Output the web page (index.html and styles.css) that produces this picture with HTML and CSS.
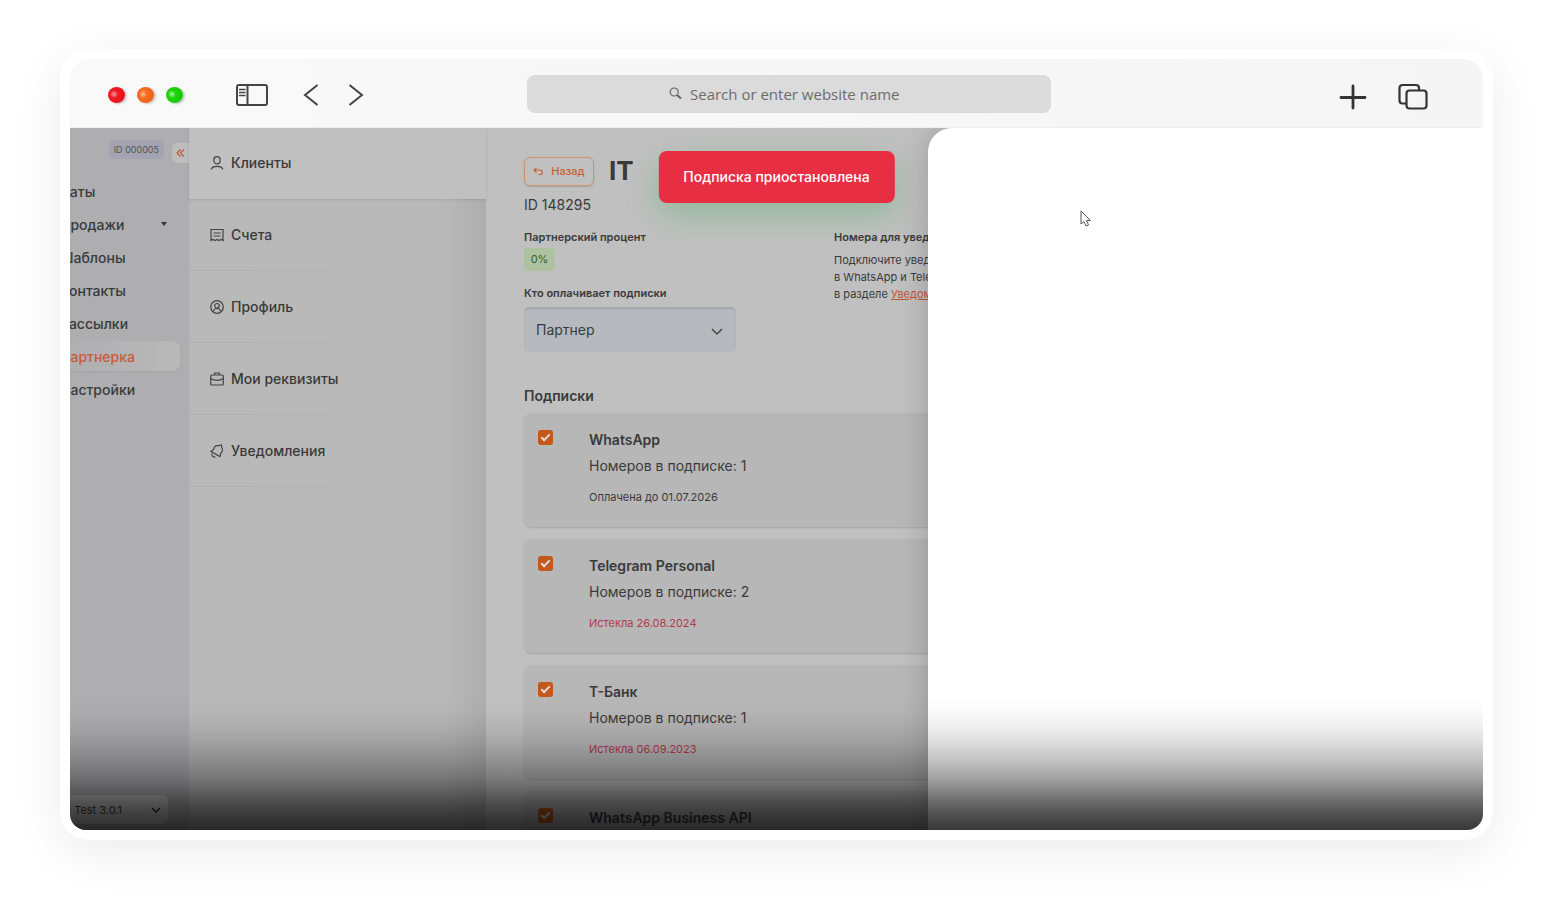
FILE: index.html
```html
<!DOCTYPE html>
<html lang="ru">
<head>
<meta charset="UTF-8">
<meta name="viewport" content="width=device-width, initial-scale=1.0">
<title>Партнерка</title>
<link rel="stylesheet" href="styles.css">
</head>
<body>

<div class="window">
  <header class="toolbar">
    <div class="dots">
      <span class="dot red"></span>
      <span class="dot orange"></span>
      <span class="dot green"></span>
    </div>
    <button class="tool panel-btn" type="button" aria-label="Sidebar">
      <svg width="34" height="24" viewBox="0 0 34 24" fill="none" stroke="#444" stroke-width="2">
        <rect x="2" y="2" width="30" height="20" rx="2"/>
        <path d="M12.500 2v20"/>
        <path d="M4 6.500h6.500M4 9.500h6.500M4 12.500h6.500" stroke-width="1.500"/>
      </svg>
    </button>
    <button class="tool back-btn" type="button" aria-label="Back">
      <svg width="16" height="22" viewBox="0 0 16 22" fill="none" stroke="#444" stroke-width="2"><path d="M14.500 1L2 11l12.500 10"/></svg>
    </button>
    <button class="tool forward-btn" type="button" aria-label="Forward">
      <svg width="16" height="22" viewBox="0 0 16 22" fill="none" stroke="#444" stroke-width="2"><path d="M1.500 1L14 11L1.500 21"/></svg>
    </button>
    <label class="search">
      <svg width="13" height="13" viewBox="0 0 13 13" fill="none" stroke="#666"><circle cx="5.200" cy="5" r="4" stroke-width="1.200"/><path d="M8 8l4 3.500" stroke-width="2"/></svg>
      <input type="text" placeholder="Search or enter website name" aria-label="Search or enter website name">
    </label>
    <button class="tool" type="button" aria-label="New tab">
      <svg width="28" height="28" viewBox="0 0 28 28" fill="none" stroke="#333" stroke-width="2.800" stroke-linecap="round"><path d="M14 3v22M2 14.500h24"/></svg>
    </button>
    <button class="tool tabs-btn" type="button" aria-label="Tabs">
      <svg width="30" height="28" viewBox="0 0 30 28" fill="none" stroke="#333" stroke-width="2.200">
        <path d="M8 20.500H4.500a3 3 0 0 1-3-3V5a3 3 0 0 1 3-3H18a3 3 0 0 1 3 3v2"/>
        <rect x="8.500" y="7.500" width="20" height="18" rx="3"/>
      </svg>
    </button>
  </header>

  <div class="page">
    <aside class="sidebar">
      <div class="account">
        <span class="account-id">ID 000005</span>
        <button class="collapse" type="button" aria-label="Свернуть">
          <svg width="9" height="8" viewBox="0 0 9 8" fill="none" stroke="#c5582a" stroke-width="1.200"><path d="M4.500 .5L1 4l3.500 3.500M8 .5L4.500 4L8 7.500"/></svg>
        </button>
      </div>
      <nav class="menu">
        <a href="#">Чаты</a>
        <a href="#">Продажи <span class="caret"></span></a>
        <a href="#">Шаблоны</a>
        <a href="#">Контакты</a>
        <a href="#">Рассылки</a>
        <a href="#" class="active">Партнерка</a>
        <a href="#">Настройки</a>
      </nav>
      <div class="project">
        <select aria-label="Проект"><option>Client: Test 3.0.1</option></select>
        <svg class="arrow" width="10" height="7" viewBox="0 0 10 7" fill="none" stroke="#222" stroke-width="1.300"><path d="M1 1l4 4l4-4"/></svg>
      </div>
    </aside>

    <nav class="sections">
      <a href="#" class="current">
        <svg viewBox="0 0 14 14"><ellipse cx="7" cy="4.300" rx="3.200" ry="3.600"/><path d="M1.500 13.500v-1c2-2.800 9-2.800 11 0v1"/></svg>
        Клиенты
      </a>
      <a href="#">
        <svg viewBox="0 0 14 14"><path d="M1 12.500V1.500h12v11l-2-1-2 1-2-1-2 1-2-1zM3.500 5h7M3.500 8h7"/></svg>
        Счета
      </a>
      <a href="#">
        <svg viewBox="0 0 14 14"><circle cx="7" cy="7" r="6.300"/><circle cx="7" cy="5.800" r="2.300"/><path d="M3.500 11.500c0-4 7-4 7 0"/></svg>
        Профиль
      </a>
      <a href="#">
        <svg viewBox="0 0 14 14"><rect x=".7" y="3" width="12.600" height="10" rx="1"/><path d="M4.500 3V1h5v2M.7 6.500C4 9 10 9 13.300 6.500M5.500 8.500h3"/></svg>
        Мои реквизиты
      </a>
      <a href="#">
        <svg viewBox="0 0 14 14"><path d="M1 7.500L3.500 5.500C4.200 2.800 6.200 1.300 8.500 1.700L11.500 1l.3 2.500c1.200 2.200.7 4.300-1 5.800L10 12.500zM1.500 9.800c.2 2 1.800 3.500 4 3.200"/></svg>
        Уведомления
      </a>
    </nav>

    <main class="content">
      <div class="heading">
        <button class="return" type="button">
          <svg width="10" height="9" viewBox="0 0 10 9" fill="none" stroke="#c5622f" stroke-width="1.200"><path d="M3.500 1L1 3l2.500 2.500M1 3h6c3 0 3 4.500 0 4.500H5.500"/></svg>
          Назад
        </button>
        <h1>IT</h1>
      </div>
      <p class="client-id">ID 148295</p>

      <div class="params">
        <div>
          <h3>Партнерский процент</h3>
          <span class="percent">0%</span>
          <label class="payer-label" for="payer">Кто оплачивает подписки</label>
          <div class="payer">
            <select id="payer"><option>Партнер</option></select>
            <svg class="arrow" width="12" height="8" viewBox="0 0 12 8" fill="none" stroke="#444" stroke-width="1.500"><path d="M1 1l5 5l5-5"/></svg>
          </div>
        </div>
        <div>
          <h3>Номера для уведомлений</h3>
          <p class="hint">Подключите уведомления<br>в WhatsApp и Telegram<br>в разделе <a href="#">Уведомления</a></p>
        </div>
      </div>

      <h2>Подписки</h2>
      <div class="cards">
        <div class="card">
          <input type="checkbox" id="sub1" checked>
          <div>
            <label for="sub1">WhatsApp</label>
            <p>Номеров в подписке: 1</p>
            <small>Оплачена до 01.07.2026</small>
          </div>
        </div>
        <div class="card">
          <input type="checkbox" id="sub2" checked>
          <div>
            <label for="sub2">Telegram Personal</label>
            <p>Номеров в подписке: 2</p>
            <small class="expired">Истекла 26.08.2024</small>
          </div>
        </div>
        <div class="card">
          <input type="checkbox" id="sub3" checked>
          <div>
            <label for="sub3">Т-Банк</label>
            <p>Номеров в подписке: 1</p>
            <small class="expired">Истекла 06.09.2023</small>
          </div>
        </div>
        <div class="card">
          <input type="checkbox" id="sub4" checked>
          <div>
            <label for="sub4">WhatsApp Business API</label>
          </div>
        </div>
      </div>
    </main>

    <div class="toast" role="alert">Подписка приостановлена</div>
    <div class="drawer"></div>
    <svg class="cursor" width="12" height="18" viewBox="0 0 12 18" fill="#fff" stroke="#555"><path d="M1 1v13l3-2.500l2 4.500l2.500-1l-2-4.500H10.500z"/></svg>
    <div class="shade"></div>
  </div>
</div>

</body>
</html>
```
FILE: styles.css
```css
* {
  box-sizing: border-box;
}

body {
  min-height: 100vh;
  margin: 0;
  padding: 49px 60px 0;
  background-color: #fff;
  font-family: Inter, "Liberation Sans", sans-serif;
  color: #3a3a3a;
}

h1, h2, h3, p {
  margin: 0;
}

a {
  color: inherit;
  text-decoration: none;
}

button, select, input {
  font-family: inherit;
  color: inherit;
}

.window {
  display: flex;
  flex-direction: column;
  height: calc(100vh - 121px);
  padding: 10px;
  background-color: #fff;
  border-radius: 28px;
  box-shadow: 0 12px 50px rgba(0, 0, 0, 0.08);
}

/* browser toolbar */
.toolbar {
  display: flex;
  align-items: center;
  flex: none;
  height: 69px;
  padding: 0 55px 0 38px;
  background: linear-gradient(to right, #f9f9f9, #f5f5f5);
  border-radius: 20px 20px 0 0;
  border-bottom: 1px solid #eee;
}

.dots {
  display: flex;
  gap: 12px;
  padding-top: 4px;
}

.dot {
  width: 17px;
  height: 16px;
  border-radius: 50%;
  box-shadow: 2px 1px 2px rgba(0, 0, 0, 0.2);
}

.red {
  background: radial-gradient(circle at 35% 45%, #ff9c9c, #ee1c24 28%, #dd0a12);
}

.orange {
  background: radial-gradient(circle at 35% 45%, #ffc09c, #f66c22 28%, #ec5c10);
}

.green {
  background: radial-gradient(circle at 35% 45%, #a0ff9c, #1ed20c 28%, #10c400);
}

.tool {
  display: flex;
  padding: 0;
  border: none;
  background: none;
  cursor: pointer;
}

.panel-btn {
  margin: 4px 34px 0 52px;
}

.back-btn {
  margin: 4px 29px 0 0;
}

.forward-btn {
  margin-top: 4px;
}

.search {
  display: flex;
  align-items: center;
  justify-content: center;
  gap: 8px;
  flex: 1;
  height: 38px;
  margin: 1px 288px 0 163px;
  border-radius: 8px;
  background-color: #dbdbdb;
}

.search input {
  width: 219px;
  padding: 0;
  border: none;
  outline: none;
  background: none;
  font-family: "Open Sans", sans-serif;
  font-size: 15px;
}

.search input::placeholder {
  color: #6c6c6c;
  opacity: 1;
}

.toolbar .search ~ .tool {
  margin-top: 8px;
}

.toolbar .tabs-btn {
  margin-left: 31px;
}

/* app */
.page {
  position: relative;
  display: flex;
  flex: 1;
  min-height: 0;
  overflow: hidden;
  background-color: #c0c0c0;
  border-radius: 0 0 16px 16px;
}

.sidebar {
  display: flex;
  flex-direction: column;
  width: 119px;
  flex: none;
  overflow: hidden;
  background-color: #aeaeb1;
}

.account {
  display: flex;
  justify-content: flex-end;
  gap: 8px;
  height: 48px;
  padding-top: 12px;
}

.account-id {
  height: 19px;
  padding: 0 5px;
  border-radius: 4px;
  background-color: #a3a3b3;
  color: #555;
  font-size: 9px;
  line-height: 19px;
}

.collapse {
  display: flex;
  align-items: center;
  width: 17px;
  height: 20px;
  margin-top: 3px;
  padding: 0 4px;
  border: none;
  border-radius: 5px 0 0 5px;
  background-color: #bdbdbd;
}

.menu {
  margin-left: -10px;
}

.menu a {
  display: flex;
  align-items: center;
  justify-content: space-between;
  height: 30px;
  margin: 0 9px 3px 0;
  padding-right: 13px;
  border-radius: 0 8px 8px 0;
  font-size: 14px;
  font-weight: 500;
}

.menu .active {
  background: linear-gradient(to right, #aeaeb1, #b9b9b9);
  box-shadow: 0 1px 2px rgba(0, 0, 0, 0.06);
  color: #cb5a38;
}

.caret {
  border: 3px solid transparent;
  border-top: 4px solid #333;
  border-bottom: 0;
}

.project,
.payer {
  position: relative;
}

.project {
  margin: auto 21px 6px -40px;
}

.project select,
.payer select {
  width: 100%;
  border: none;
  appearance: none;
}

.project select {
  height: 29px;
  padding: 0 8px;
  border-radius: 6px;
  background-color: #c8c8c8;
  font-size: 11px;
}

.arrow {
  position: absolute;
  top: 12px;
  right: 7px;
  pointer-events: none;
}

.sections {
  width: 297px;
  flex: none;
  background: linear-gradient(to left, #adadad, #b9b9b9 40px);
}

.sections a {
  display: flex;
  align-items: center;
  gap: 7px;
  height: 72px;
  padding-left: 21px;
  border-bottom: 1px solid;
  border-image: linear-gradient(to right, #adadad, transparent 80%) 1;
  font-size: 14px;
  font-weight: 500;
}

.sections .current {
  height: 71px;
  padding-bottom: 2px;
  border: none;
  background-color: #c0c0c0;
  box-shadow: 0 1px 3px rgba(0, 0, 0, 0.12);
}

.sections svg {
  width: 14px;
  height: 14px;
  fill: none;
  stroke: #444;
  stroke-width: 1.200;
}

.content {
  flex: 1;
  min-width: 0;
  padding: 28px 38px 0;
}

.heading {
  display: flex;
  align-items: center;
  gap: 15px;
  height: 30px;
}

.return {
  display: flex;
  align-items: center;
  justify-content: center;
  gap: 8px;
  width: 70px;
  height: 29px;
  padding: 0;
  border: 1px solid #d0916c;
  border-radius: 6px;
  background: none;
  box-shadow: 0 1px 2px rgba(0, 0, 0, 0.15);
  color: #c5622f;
  font-size: 11px;
  font-weight: 500;
}

h1 {
  font-size: 26px;
  line-height: 28px;
  font-weight: 700;
}

.client-id {
  margin-top: 9px;
  font-size: 14px;
  line-height: 20px;
}

.params {
  display: grid;
  grid-template-columns: 310px 1fr;
  margin-top: 14px;
}

h3,
.payer-label {
  display: block;
  font-size: 11px;
  line-height: 16px;
  font-weight: 600;
}

.percent {
  display: block;
  width: 31px;
  height: 23px;
  margin: 3px 0 14px;
  border-radius: 4px;
  background-color: #adc2a1;
  color: #3a5a33;
  font-size: 11px;
  line-height: 23px;
  text-align: center;
}

.payer {
  width: 212px;
  margin-top: 6px;
}

.payer select {
  height: 45px;
  padding: 0 12px;
  border-radius: 5px;
  background-color: #b6babf;
  box-shadow: inset 0 2px 2px rgba(0, 0, 0, 0.1);
  font-size: 14px;
}

.payer .arrow {
  top: 21px;
  right: 13px;
}

.hint {
  margin-top: 7px;
  font-size: 11px;
  line-height: 17px;
}

.hint a {
  color: #c25433;
  text-decoration: underline;
}

h2 {
  margin-top: 34px;
  font-size: 14px;
  line-height: 20px;
  font-weight: 600;
}

.cards {
  display: flex;
  flex-direction: column;
  gap: 12px;
  margin-top: 7px;
}

.card {
  display: flex;
  gap: 36px;
  height: 114px;
  padding: 17px 14px;
  border-radius: 8px;
  background-color: #b7b7b7;
  box-shadow: 0 1px 2px rgba(0, 0, 0, 0.14);
}

.card input {
  width: 15px;
  height: 15px;
  margin: 0;
  appearance: none;
  border-radius: 3px;
  background-color: #c4581a;
}

.card input::after {
  content: "";
  display: block;
  width: 7px;
  height: 3px;
  margin: 4px 3px;
  border: solid #ddd;
  border-width: 0 0 2px 2px;
  transform: rotate(-45deg);
}

.card label {
  display: block;
  font-size: 14px;
  line-height: 20px;
  font-weight: 600;
}

.card p {
  margin-top: 6px;
  font-size: 14px;
  line-height: 20px;
}

.card small {
  display: block;
  margin-top: 12px;
  font-size: 11px;
  line-height: 18px;
}

.card .expired {
  color: #b33a4a;
}

/* overlays */
.toast {
  position: absolute;
  top: 23px;
  left: 50%;
  transform: translateX(-50%);
  padding: 16px 25px;
  border-radius: 8px;
  background-color: #e72e42;
  box-shadow: 0 12px 30px rgba(60, 170, 90, 0.35);
  color: #fff;
  font-size: 14px;
  line-height: 20px;
  font-weight: 500;
  white-space: nowrap;
}

.drawer {
  position: absolute;
  top: 0;
  right: 0;
  bottom: 0;
  width: 555px;
  border-radius: 24px 0 0 0;
  background-color: #fff;
  box-shadow: 0 0 30px rgba(0, 0, 0, 0.2);
}

.cursor {
  position: absolute;
  top: 82px;
  right: 391px;
}

.shade {
  position: absolute;
  right: 0;
  bottom: 0;
  left: 0;
  height: 134px;
  background: linear-gradient(to bottom, transparent, rgba(0, 0, 0, 0.02) 12%, rgba(0, 0, 0, 0.08) 26%, rgba(0, 0, 0, 0.14) 36%, rgba(0, 0, 0, 0.24) 48%, rgba(0, 0, 0, 0.35) 60%, rgba(0, 0, 0, 0.47) 70%, rgba(0, 0, 0, 0.6) 80%, rgba(0, 0, 0, 0.7) 90%, rgba(0, 0, 0, 0.78));
  pointer-events: none;
}
```
